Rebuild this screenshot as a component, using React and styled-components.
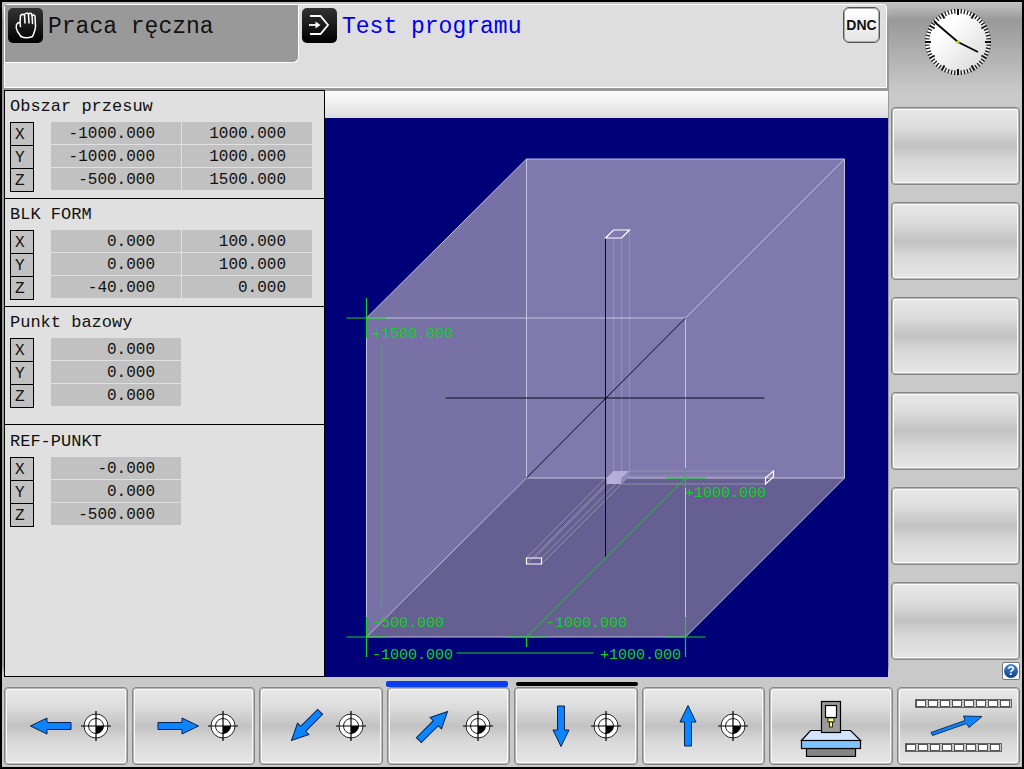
import React from 'react';
import styled, { createGlobalStyle } from 'styled-components';

const sections = [
  {
    title: 'Obszar przesuw',
    rows: [
      ['X', '-1000.000', '1000.000'],
      ['Y', '-1000.000', '1000.000'],
      ['Z', '-500.000', '1500.000'],
    ],
  },
  {
    title: 'BLK FORM',
    rows: [
      ['X', '0.000', '100.000'],
      ['Y', '0.000', '100.000'],
      ['Z', '-40.000', '0.000'],
    ],
  },
  {
    title: 'Punkt bazowy',
    tall: true,
    rows: [
      ['X', '0.000'],
      ['Y', '0.000'],
      ['Z', '0.000'],
    ],
  },
  {
    title: 'REF-PUNKT',
    rows: [
      ['X', '-0.000'],
      ['Y', '0.000'],
      ['Z', '-500.000'],
    ],
  },
];

const jogKeys = [
  { label: 'X-', angle: 0 },
  { label: 'X+', angle: 180 },
  { label: 'Y-', angle: -45 },
  { label: 'Y+', angle: 135 },
  { label: 'Z-', angle: -90 },
  { label: 'Z+', angle: 90 },
];

const sideKeys = [1, 2, 3, 4, 5, 6];
const cells = [0, 1, 2, 3, 4, 5, 6, 7];
const ticks = Array.from({ length: 60 }, (_, i) => i);

function HandIcon() {
  return (
    <svg width="35" height="35" viewBox="0 0 35 35" fill="none" stroke="#fff" strokeWidth="1.500" strokeLinejoin="round" strokeLinecap="round">
      <path d="M13 28.500L9.500 23.500Q7.500 20 8.500 16.500Q9.500 14.500 12 14.500L12.500 18.500" />
      <path d="M12 14.500L12.500 7.500Q14.500 5.500 16.500 7L17 15" />
      <path d="M16.500 6.500Q18.500 4 20.500 6L21 15" />
      <path d="M20.500 6Q22.500 4.500 24 6.500L24.500 15.500" />
      <path d="M24 7.500Q26.500 6 27 8.500L27.500 18Q27.500 22 24.500 28.500Q18 31 13 28.500" />
    </svg>
  );
}

function TestIcon() {
  return (
    <svg width="35" height="35" viewBox="0 0 35 35" fill="none" stroke="#fff" strokeWidth="1.800">
      <path d="M8 8H18.500L26 17L18.500 26H8" />
      <path d="M7 17H15" />
      <path d="M13.500 13.500L18.500 17L13.500 20.500Z" fill="#fff" stroke="none" />
    </svg>
  );
}

function Clock() {
  return (
    <svg width="70" height="70" viewBox="-35 -35 70 70" role="img" aria-label="Zegar">
      <defs>
        <linearGradient id="dial" x1="0" y1="0" x2="1" y2="1">
          <stop offset="0.3" stopColor="#fff" />
          <stop offset="1" stopColor="#d4d4d4" />
        </linearGradient>
      </defs>
      <circle r="32.500" fill="url(#dial)" />
      {ticks.map(i => (
        <line key={i} y1={i % 5 === 0 ? -27 : -28.5} y2="-33" stroke="#111"
          strokeWidth={i % 5 === 0 ? 2 : 1.2} transform={`rotate(${i * 6})`} />
      ))}
      <path d="M0 0L-24 -20.500M0 0L20 10" stroke="#000" strokeWidth="1.800" />
      <circle r="1.800" fill="#b4d020" />
    </svg>
  );
}

function Arrow({ angle }) {
  return (
    <svg width="44" height="44" viewBox="0 0 44 44">
      <path d="M1.500 22L18 14V18.500H42V25.500H18V30Z" fill="#0a84ff" stroke="#06224a" strokeWidth="1"
        transform={`rotate(${angle} 22 22)`} />
    </svg>
  );
}

function Target() {
  return (
    <svg width="30" height="30" viewBox="-15 -15 30 30" fill="none" stroke="#222">
      <circle r="12" fill="#fff" strokeWidth="1" />
      <circle r="7.500" strokeWidth="1" />
      <path d="M0 0H7.500A7.500 7.500 0 0 1 0 7.500Z" fill="#000" stroke="none" />
      <path d="M-15 0H15M0 -15V15" stroke="#000" strokeWidth="1.200" />
    </svg>
  );
}

function MachineIcon() {
  return (
    <svg width="62" height="62" viewBox="0 -5 62 62" stroke="#000" strokeWidth="1.200">
      <path d="M10.500 30.500H50.500L60.500 40.500H1.500Z" fill="#d4e4ff" />
      <rect x="6.500" y="48.500" width="49" height="8" fill="#858585" />
      <rect x="1.500" y="40.500" width="59" height="8" fill="#80c4ff" />
      <rect x="21.500" y="1.500" width="19" height="31" fill="#9a9a9a" />
      <rect x="25.500" y="5.500" width="11" height="12" fill="#fff" />
      <rect x="28" y="18" width="6" height="4" fill="#ffff80" strokeWidth="0.800" />
      <rect x="29.500" y="22" width="3" height="5" fill="#ffff80" strokeWidth="0.800" />
    </svg>
  );
}

function PaletteIcon() {
  return (
    <svg width="108" height="54" viewBox="-1 0 108 54">
      {[[10.5, 0.5], [0.5, 44.5]].map(([x, y]) => (
        <g key={y} transform={`translate(${x} ${y})`}>
          <rect width="96" height="8" fill="#c4c4c4" stroke="#666" />
          {cells.map(i => (
            <rect key={i} x={i * 12 + 1} y="1" width="9" height="6" fill="#fff" stroke="#444" strokeWidth="0.900" />
          ))}
        </g>
      ))}
      <path d="M26 33.500L60 21.500L58.500 17L77 17.500L64 28.500L61.500 24.500L27.500 36.500Z" fill="#0a84ff" stroke="#06224a" strokeWidth="0.900" />
    </svg>
  );
}

// Work envelope of the machine with the blank in the middle
function Workspace() {
  return (
    <Scene viewBox="326 119 563 558" role="img" aria-label="Przestrzeń robocza">
      <g transform="translate(0.500 0.500)" fill="none">
        <path d="M367 318L527 159V478L367 637Z" fill="#7771a6" />
        <path d="M527 159H845V478H527Z" fill="#7f79ae" />
        <path d="M367 637L527 478H845L686 637Z" fill="#665f92" />

        <g stroke="#9490a8">
          <path d="M614 238V472M622 238V480M630 230V471" />
          <path d="M630 471H774M622 476H774M622 484H766" />
          <path d="M606 478L527 558M614 478L535 558M622 478L542 558M622 484L542 564M606 484L527 564" />
        </g>

        <g stroke="#c6c3dc">
          <path d="M367 318H686V637H367Z" />
          <path d="M527 478V159H845V478Z" />
          <path d="M367 318L527 159M686 318L845 159M686 637L845 478M367 637L527 478" />
        </g>

        <path d="M607 478L614 471H630L622 478V484H607Z" fill="#b5aed8" />
        <path d="M630 471L622 478V484L630 477Z" fill="#8f88ba" />

        <g stroke="#0c0a20">
          <path d="M446 398H765M606 238V557M527 478L686 318" />
        </g>

        <g stroke="#fff" strokeWidth="1.200">
          <path d="M606 238L614 230H630L622 238Z" />
          <path d="M766 478L774 471V477L766 484Z" />
          <path d="M527 558H542V564H527Z" />
        </g>

        <g stroke="#12d024" strokeWidth="1.200">
          <path d="M347 318H387M367 298V338" />
          <path d="M347 637H387M367 617V657" />
          <path d="M507 637H547M527 637V647" />
          <path d="M666 637H706M686 617V657" />
          <path d="M666 478H706M686 468V488" />
          <path d="M382 344V607M457 653H594" />
          <path d="M527 637L686 478" strokeWidth="1" />
        </g>
      </g>
      <SceneText x="373" y="338">+1500.000</SceneText>
      <SceneText x="373" y="627">-500.000</SceneText>
      <SceneText x="547" y="627">-1000.000</SceneText>
      <SceneText x="686" y="497">+1000.000</SceneText>
      <SceneText x="373" y="659">-1000.000</SceneText>
      <SceneText x="601" y="659">+1000.000</SceneText>
    </Scene>
  );
}

function AxisSection({ title, rows, tall }) {
  return (
    <Section $tall={tall}>
      <SectionTitle>{title}</SectionTitle>
      <AxisTable>
        <tbody>
          {rows.map(([axis, ...values]) => (
            <AxisRow key={axis}>
              <AxisName scope="row">{axis}</AxisName>
              {values.map((value, i) => <AxisValue key={i}>{value}</AxisValue>)}
            </AxisRow>
          ))}
        </tbody>
      </AxisTable>
    </Section>
  );
}

function App() {
  return (
    <Screen>
      <GlobalStyle />
      <Upper>
        <MainColumn>
          <Header>
            <ModeTab>
              <ModeIcon><HandIcon /></ModeIcon>
              Praca ręczna
            </ModeTab>
            <ModeTab $active>
              <ModeIcon><TestIcon /></ModeIcon>
              Test programu
            </ModeTab>
            <DncButton>DNC</DncButton>
          </Header>
          <Content>
            <Panel>
              {sections.map(section => <AxisSection key={section.title} {...section} />)}
            </Panel>
            <Viewer>
              <ViewerBar />
              <Workspace />
            </Viewer>
          </Content>
        </MainColumn>

        <Sidebar>
          <ClockBox><Clock /></ClockBox>
          <SideKeys>
            {sideKeys.map(key => <SoftKey key={key} aria-label={`Softkey ${key}`} />)}
          </SideKeys>
          <HelpButton aria-label="Pomoc"><HelpDot>?</HelpDot></HelpButton>
        </Sidebar>
      </Upper>

      <Markers>
        <Marker $active />
        <Marker />
      </Markers>
      <SoftKeys>
        {jogKeys.map(key => (
          <SoftKey key={key.label} aria-label={key.label} $jog>
            <Arrow angle={key.angle} />
            <Target />
          </SoftKey>
        ))}
        <SoftKey aria-label="Maszyna"><MachineIcon /></SoftKey>
        <SoftKey aria-label="Palety"><PaletteIcon /></SoftKey>
      </SoftKeys>
    </Screen>
  );
}

export default App;

const GlobalStyle = createGlobalStyle`
* { box-sizing: border-box; }
body {
  margin: 0;
  background: #000;
  color: #111;
  font-family: "Liberation Mono", monospace;
}
button {
  margin: 0;
  padding: 0;
  color: inherit;
  font-family: inherit;
}
svg { display: block; flex: none; }
`

const Screen = styled.div`
display: flex;
flex-direction: column;
min-height: 100vh;
padding-bottom: 2px;
border: 2px solid #000;
background: #c9c9c9;
`

const Upper = styled.div`
display: flex;
flex: 1;
`

const MainColumn = styled.main`
display: flex;
flex-direction: column;
flex: 1;
min-width: 0;
padding: 2px 0 3px 2px;
background: linear-gradient(#c4c4c4, #999 20px, #999 98%, #c9c9c9 99%);
`

const Header = styled.header`
display: flex;
align-items: flex-start;
height: 84px;
margin: 0 2px 2px 0;
border: 1px solid #fff;
border-radius: 4px 4px 0 0;
background: #dedede;
`

const ModeTab = styled.button`
display: flex;
align-items: flex-start;
gap: 5px;
width: ${props => props.$active ? 'auto' : '294px'};
flex: ${props => props.$active ? '1' : 'none'};
height: 58px;
padding: 3px;
border: 0 solid #fff;
border-width: ${props => props.$active ? '0' : '0 1px 1px 0'};
border-radius: 0 0 6px 0;
background: ${props => props.$active ? 'transparent' : '#999'};
color: ${props => props.$active ? '#0000f0' : '#111'};
font-size: 23px;
line-height: 38px;
text-align: left;
`

const ModeIcon = styled.span`
border-radius: 5px;
background: linear-gradient(#333, #000);
`

const DncButton = styled.button`
width: 37px;
height: 36px;
margin: 2px 6px 0 0;
border: 1px solid #555;
border-radius: 6px;
background: linear-gradient(#fff, #e4e4e4);
box-shadow: inset 0 0 0 1px #aaa;
font: bold 14px/34px "Liberation Sans", sans-serif;
`

const Content = styled.div`
display: flex;
flex: 1;
`

const Panel = styled.section`
width: 321px;
border: 1px solid #000;
background: #e0e0e0;
`

const Section = styled.div`
padding: 5px 5px ${props => props.$tall ? '17px' : '7px'};
border-bottom: 1px solid #000;

&:last-child {
  padding-top: 6px;
  border-bottom: 0;
}
`

const SectionTitle = styled.h2`
margin: 0 0 4px;
font-size: 17px;
font-weight: normal;
line-height: 22px;
`

const AxisTable = styled.table`
display: block;
border-spacing: 0;
font-size: 16px;

tbody { display: block; }
`

const AxisRow = styled.tr`
display: flex;
gap: 1px;
height: 23px;
`

const AxisName = styled.th`
width: 24px;
height: 24px;
margin-right: 16px;
padding: 0 0 0 4px;
border: 1px solid #000;
background: #c1c1c1;
font-weight: normal;
line-height: 24px;
text-align: left;
`

const AxisValue = styled.td`
width: 130px;
height: 22px;
padding: 0 26px 0 0;
background: #c1c1c1;
line-height: 24px;
text-align: right;
`

const Viewer = styled.section`
display: flex;
flex-direction: column;
flex: 1;
min-width: 0;
margin-right: 1px;
background: #000078;
`

const ViewerBar = styled.div`
height: 28px;
border-top: 1px solid #999;
background: linear-gradient(#fff, #dcdcdc);
`

const Scene = styled.svg`
width: 100%;
flex: 1;
min-height: 0;
`

const SceneText = styled.text`
fill: #12d024;
font-size: 15px;
`

const Sidebar = styled.aside`
display: flex;
flex-direction: column;
width: 133px;
padding: 0 2px;
background: linear-gradient(#c4c4c4, #999 18px, #c9c9c9 90px);
`

const ClockBox = styled.div`
display: flex;
justify-content: center;
height: 105px;
padding: 5px 0 0 4px;
`

const SideKeys = styled.div`
display: flex;
flex-direction: column;
gap: 17px;
`

const SoftKey = styled.button`
display: flex;
align-items: center;
justify-content: center;
gap: 8px;
height: 78px;
padding-left: ${props => props.$jog ? '8px' : '0'};
border: 1px solid #868686;
border-radius: 4px;
background: linear-gradient(#e9e9e9, #dcdcdc 25%, #c2c2c2 50%, #d8d8d8 70%, #e6e6e6);
box-shadow: inset 0 0 0 1px #b4b4b4, inset 0 0 0 2px #fafafa;
`

const HelpButton = styled.button`
display: flex;
align-items: center;
justify-content: center;
align-self: flex-end;
width: 18px;
height: 18px;
margin-top: 2px;
border: 1px solid #777;
border-radius: 2px;
background: #fff;
`

const HelpDot = styled.span`
width: 14px;
height: 14px;
border-radius: 50%;
background: linear-gradient(#4a86cc, #0a3f8c);
color: #fff;
font: bold 12px/14px "Liberation Sans", sans-serif;
text-align: center;
`

const Markers = styled.div`
display: flex;
align-items: center;
justify-content: center;
gap: 8px;
height: 7px;
`

const Marker = styled.span`
width: 12%;
height: ${props => props.$active ? '6px' : '4px'};
border-radius: 2px;
background: ${props => props.$active ? '#0a3cf0' : '#000'};
`

const SoftKeys = styled.nav`
display: grid;
grid-template-columns: repeat(8, 1fr);
gap: 4px;
padding: 0 2px;
`
